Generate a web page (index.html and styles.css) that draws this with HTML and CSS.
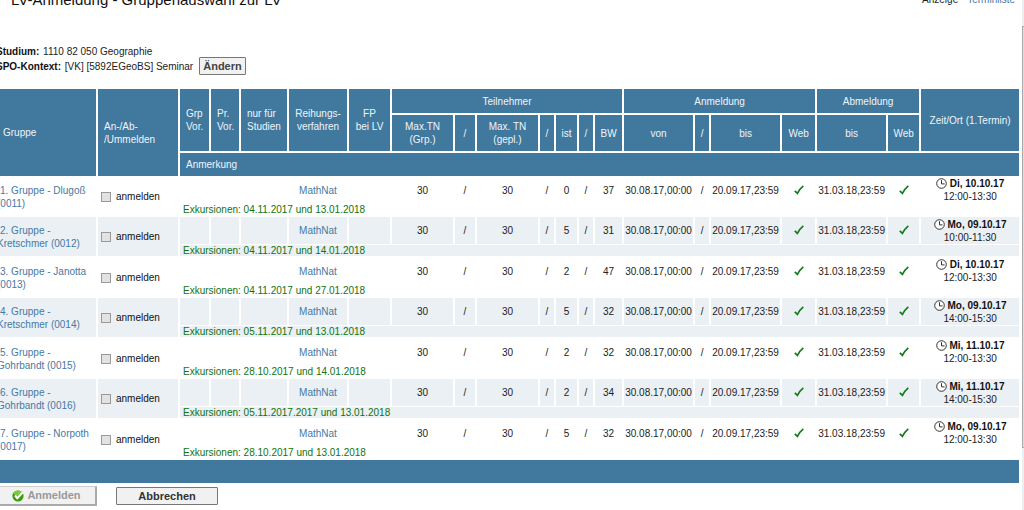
FILE: index.html
```
<!DOCTYPE html>
<html lang="de">
<head>
<meta charset="utf-8">
<title>LV-Anmeldung - Gruppenauswahl zur LV</title>
<link rel="stylesheet" href="styles.css">
</head>
<body>
<svg class="sprite" aria-hidden="true">
  <symbol id="clock" viewBox="0 0 11 11"><circle cx="5.5" cy="5.5" r="4.8" fill="#fff" stroke="#333" stroke-width="1"/><path d="M5.5 2.2V5.9H8.6" fill="none" stroke="#333" stroke-width="1"/></symbol>
  <symbol id="check" viewBox="0 0 10 10"><path d="M.8 5.900 3.400 8.400C4.800 5.800 6.700 3 9.300.900" fill="none" stroke="#117a17" stroke-width="1.700"/></symbol>
</svg>
<div class="frame">
  <main class="content">
    <header class="top">
      <h1>LV-Anmeldung - Gruppenauswahl zur LV</h1>
      <nav><span>Anzeige</span><a href="#terminliste">Terminliste</a></nav>
    </header>
    <section class="context">
      <p><b>Studium:</b> 1110 82 050 Geographie</p>
      <p><b>SPO-Kontext:</b> [VK] [5892EGeoBS] Seminar <button type="button" class="btn small">Ändern</button></p>
    </section>
    <table class="groups">
      <colgroup>
        <col class="w98"><col class="w82"><col class="w31"><col class="w30"><col class="w48"><col class="w60"><col class="w43">
        <col class="w63"><col class="w22"><col class="w63"><col class="w16"><col class="w23"><col class="w16"><col class="w29">
        <col class="w71"><col class="w16"><col class="w71"><col class="w35"><col class="w71"><col class="w33"><col class="w98">
      </colgroup>
      <thead>
        <tr class="h1">
          <th rowspan="3" class="name">Gruppe</th><th rowspan="3" class="left">An-/Ab-<br>/Ummelden</th>
          <th rowspan="2" class="left">Grp<br>Vor.</th><th rowspan="2" class="left">Pr.<br>Vor.</th>
          <th rowspan="2" class="left">nur für<br>Studien</th><th rowspan="2">Reihungs-<br>verfahren</th><th rowspan="2">FP<br>bei LV</th>
          <th colspan="7">Teilnehmer</th><th colspan="4">Anmeldung</th><th colspan="2">Abmeldung</th><th rowspan="2">Zeit/Ort (1.Termin)</th>
        </tr>
        <tr class="h2">
          <th>Max.TN<br>(Grp.)</th><th>/</th><th>Max. TN<br>(gepl.)</th><th>/</th><th>ist</th><th>/</th><th>BW</th>
          <th>von</th><th>/</th><th>bis</th><th>Web</th><th>bis</th><th>Web</th>
        </tr>
        <tr class="h3"><th colspan="19" class="left">Anmerkung</th></tr>
      </thead>
      <tbody id="rows"></tbody>
      <tfoot><tr><td colspan="21"></td></tr></tfoot>
    </table>
    <div class="actions">
      <button type="button" class="btn submit" disabled>
        <svg viewBox="0 0 12 12" aria-hidden="true"><circle cx="6" cy="6" r="5.600" fill="#3d9c14"/><path d="M1.500 3A5.600 5.600 0 0 1 10 2L4 7Z" fill="#7ccb3c"/><path d="M3 5.600 5.300 8.200 10.500 2.500" fill="none" stroke="#fff" stroke-width="2"/></svg>
        Anmelden
      </button>
      <button type="button" class="btn cancel">Abbrechen</button>
    </div>
  </main>
  <div class="rail"><div class="thumb"></div></div>
</div>
<script src="rows.js"></script>
</body>
</html>
```

FILE: styles.css
```
body {
  margin: 0;
  overflow: hidden;
  background: #fff;
  color: #222;
  font: 10px/13px "Liberation Sans", Arial, sans-serif;
}
.sprite { display: none; }
.frame { display: flex; min-height: 100vh; }
.content { flex: 1; min-width: 0; padding-right: 3px; }
.rail { width: 2px; box-sizing: border-box; padding-top: 26px; background: #eee; }
.thumb { height: 422px; box-sizing: border-box; border: 1px solid #aaa; border-right: 0; background: #ddd; }
a { color: #4679a5; text-decoration: none; }

.top { display: flex; justify-content: space-between; margin-top: -9px; padding: 0 4px 0 11px; }
h1 { margin: 0; font-size: 15px; line-height: 18px; font-weight: normal; color: #111; }
nav { display: flex; gap: 9px; padding-top: 2px; }

.context { margin: 35px 0 15px -4px; }
.context p { margin: 0; height: 15px; line-height: 15px; white-space: nowrap; }
.context b { margin-right: 1px; color: #111; }

.btn {
  padding: 0;
  border: 1px solid #777;
  border-radius: 1px;
  background: #f1f1f1;
  color: #333;
  font: bold 11px/15px "Liberation Sans", Arial, sans-serif;
}
.small { width: 47px; height: 18px; margin: -3px 0 -1px 3px; color: #444; vertical-align: middle; }

.groups { width: 100%; table-layout: fixed; border-collapse: separate; border-spacing: 0; }
.groups th, .groups td {
  box-sizing: border-box;
  padding: 0;
  border: 0 solid #fff;
  border-right-width: 2px;
  background-clip: padding-box;
  text-align: center;
  font-weight: normal;
  white-space: nowrap;
}
.groups tr > :last-child { border-right-width: 0; }
.groups thead th { background-color: #41789e; color: #eef5fa; }
.groups .h1 th { height: 26px; border-bottom-width: 2px; }
.groups .h2 th { height: 38px; border-bottom-width: 2px; }
.groups .h2 th:last-child { border-right-width: 2px; }
.groups .h3 th { height: 23px; }
.groups .h1 th[rowspan="3"] { border-bottom-width: 0; }
.groups th.left { padding-left: 6px; text-align: left; }
.groups th.name { padding-left: 3px; text-align: left; }
.groups tfoot td { height: 23px; background: #41789e; }

.groups .data td { height: 28px; }
.groups .note td { height: 13px; padding-left: 3px; text-align: left; vertical-align: top; line-height: 11px; color: #117311; }
.groups .even td { background-color: #eaf0f4; border-bottom-width: 1px; }
.groups .note.even td { height: 12px; }
.groups td.group { text-align: left; }
.group a { display: block; margin-left: -3px; text-indent: 3px; }
.groups td.pick { padding-left: 3px; text-align: left; }
.pick label { display: flex; align-items: center; gap: 5px; color: #111; }
.pick input {
  appearance: none;
  width: 10px;
  height: 10px;
  margin: 0;
  border: 1px solid #999;
  background: #e2e2e2;
}
.check { width: 10px; height: 10px; vertical-align: -1px; }
.clock { width: 11px; height: 11px; margin: -2px 0; }
.time b { color: #111; }

.w16 { width: 16px; } .w22 { width: 22px; } .w23 { width: 23px; } .w29 { width: 29px; }
.w30 { width: 30px; } .w31 { width: 31px; } .w33 { width: 33px; } .w35 { width: 35px; }
.w43 { width: 43px; } .w48 { width: 48px; } .w60 { width: 60px; } .w63 { width: 63px; }
.w71 { width: 71px; } .w82 { width: 82px; } .w98 { width: 98px; }

.actions { display: flex; align-items: center; gap: 19px; padding-top: 3px; margin-left: -3px; }
.submit {
  display: flex;
  align-items: center;
  justify-content: center;
  gap: 3px;
  width: 100px;
  height: 20px;
  border: 1px solid #ccc;
  border-right: 2px solid #aaa;
  border-bottom: 2px solid #aaa;
  color: #999;
}
.submit svg { width: 12px; height: 12px; }
.cancel { width: 102px; height: 18px; }
```

FILE: rows.js
```
const groups = [
  ["1. Gruppe - Dlugoß", "(0011)", 0, 37, "Di, 10.10.17", "12:00-13:30", "04.11.2017 und 13.01.2018"],
  ["2. Gruppe -", "Kretschmer (0012)", 5, 31, "Mo, 09.10.17", "10:00-11:30", "04.11.2017 und 14.01.2018"],
  ["3. Gruppe - Janotta", "(0013)", 2, 47, "Di, 10.10.17", "12:00-13:30", "04.11.2017 und 27.01.2018"],
  ["4. Gruppe -", "Kretschmer (0014)", 5, 32, "Mo, 09.10.17", "14:00-15:30", "05.11.2017 und 13.01.2018"],
  ["5. Gruppe -", "Gohrbandt (0015)", 2, 32, "Mi, 11.10.17", "12:00-13:30", "28.10.2017 und 14.01.2018"],
  ["6. Gruppe -", "Gohrbandt (0016)", 2, 34, "Mi, 11.10.17", "14:00-15:30", "05.11.2017.2017 und 13.01.2018"],
  ["7. Gruppe - Norpoth", "(0017)", 5, 32, "Mo, 09.10.17", "12:00-13:30", "28.10.2017 und 13.01.2018"]
];
const check = '<svg class="check" role="img" aria-label="Web"><use href="#check"/></svg>';
document.getElementById("rows").innerHTML = groups.map(([name, rest, ist, bw, day, time, note], i) => {
  const parity = i % 2 ? "even" : "odd";
  return `<tr class="data ${parity}">
    <td rowspan="2" class="group"><a href="#gruppe${i + 1}">${name}<br>${rest}</a></td>
    <td rowspan="2" class="pick"><label><input type="checkbox"> anmelden</label></td>
    <td></td><td></td><td></td><td><a href="#mathnat">MathNat</a></td><td></td>
    <td>30</td><td>/</td><td>30</td><td>/</td><td>${ist}</td><td>/</td><td>${bw}</td>
    <td>30.08.17,00:00</td><td>/</td><td>20.09.17,23:59</td><td>${check}</td>
    <td>31.03.18,23:59</td><td>${check}</td>
    <td class="time"><svg class="clock" aria-hidden="true"><use href="#clock"/></svg> <b>${day}</b><br>${time}</td>
  </tr><tr class="note ${parity}"><td colspan="19">Exkursionen: ${note}</td></tr>`;
}).join("");
```
